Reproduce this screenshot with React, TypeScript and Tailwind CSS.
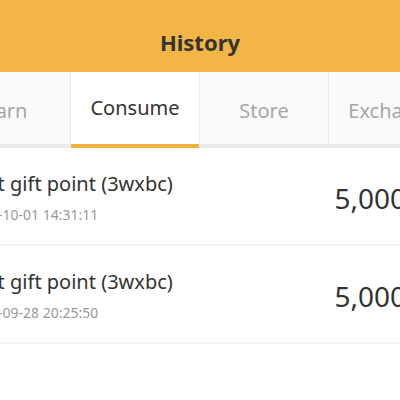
import React, { useState } from 'react';

interface HistoryItem {
  title: string;
  time: string;
  amount: string;
}

const tabs = ['Earn', 'Consume', 'Store', 'Exchange'];

const items: HistoryItem[] = [
  { title: 'Sent gift point (3wxbc)', time: '2023-10-01 14:31:11', amount: '5,000' },
  { title: 'Sent gift point (3wxbc)', time: '2023-09-28 20:25:50', amount: '5,000' },
];

const App: React.FC = () => {
  const [active, setActive] = useState(1);

  return (
    <div className="min-h-screen bg-white overflow-hidden" style={{ fontFamily: '"Noto Sans", "Open Sans", sans-serif' }}>
      <div className="w-[516px] -ml-[58px]">
        {/* Header */}
        <header className="h-[72px] bg-[#f3b545] flex items-center justify-center pt-[12px]">
          <h1 className="text-[22px] font-bold text-[#333] leading-none">History</h1>
        </header>

        {/* Tabs */}
        <nav className="grid grid-cols-4">
          {tabs.map((tab, i) => {
            const isActive = i === active;
            return (
              <button
                key={tab}
                onClick={() => setActive(i)}
                className={`flex flex-col h-[76px] ${i < tabs.length - 1 ? 'border-r border-[#ececec]' : ''} ${isActive ? 'bg-white' : 'bg-[#fafafa]'}`}
              >
                <span
                  className={`flex-1 flex items-center justify-center text-[20px] ${isActive ? 'text-[#333]' : 'text-[#a6a6a6] pt-[5px]'}`}
                >
                  {tab}
                </span>
                <span className={`h-[4px] w-full ${isActive ? 'bg-[#efb23f]' : 'bg-[#ebebeb]'}`}></span>
              </button>
            );
          })}
        </nav>

        {/* List */}
        <ul>
          {items.map((item, i) => (
            <li
              key={i}
              className="flex items-center justify-between h-[98px] pl-[21px] pr-[52px] border-b-2 border-[#f4f4f4]"
            >
              <div className="flex flex-col">
                <span className="text-[20px] leading-[28px] text-[#333] mt-[3px]">{item.title}</span>
                <span className="text-[14px] leading-[20px] text-[#999] mt-[7px] ml-[3px]">{item.time}</span>
              </div>
              <span className="text-[28px] text-[#333] pt-[4px]">{item.amount}</span>
            </li>
          ))}
        </ul>
      </div>
    </div>
  );
};

export default App;
